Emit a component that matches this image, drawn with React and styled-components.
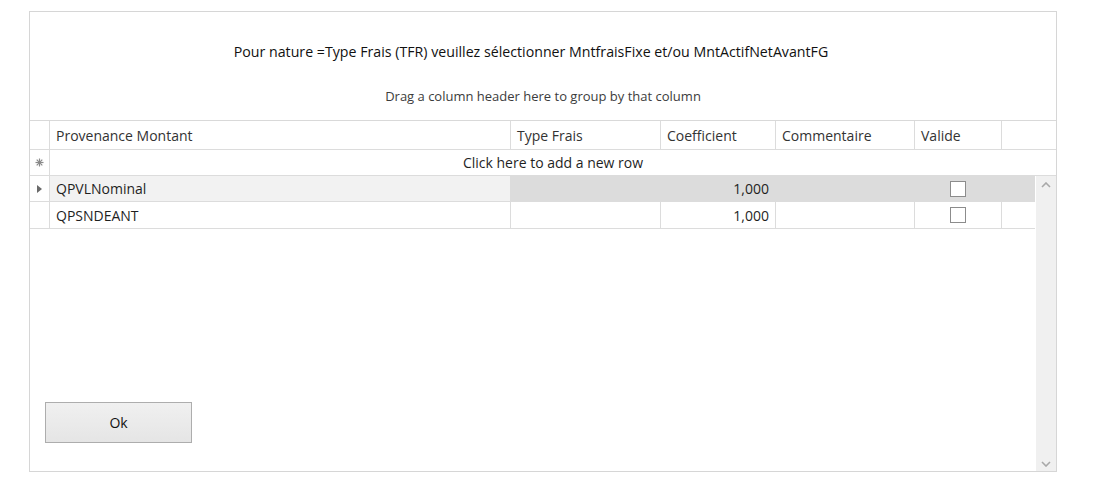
import React from "react";
import styled, { createGlobalStyle } from "styled-components";

const Global = createGlobalStyle`
  html, body { margin: 0; padding: 0; background: #ffffff; }
  body { font-family: "Open Sans", "Noto Sans", "Liberation Sans", sans-serif; color: #1f1f1f; }
  * { box-sizing: border-box; }
`;

const Page = styled.div`
  width: 1108px;
  height: 502px;
  padding: 11px 0 0 29px;
`;

const Panel = styled.div`
  width: 1028px;
  height: 461px;
  border: 1px solid #d6d6d6;
  display: flex;
  flex-direction: column;
  background: #fff;
`;

const GroupPanel = styled.div`
  height: 109px;
  border-bottom: 1px solid #d9d9d9;
  display: flex;
  flex-direction: column;
  align-items: center;
  padding-top: 30px;
`;

const Title = styled.div`
  font-size: 14.2px;
  line-height: 20px;
  color: #111;
  margin-right: 24px;
`;

const DragHint = styled.div`
  margin-top: 25px;
  font-size: 13px;
  line-height: 18px;
  color: #3c3c3c;
`;

const Row = styled.div`
  display: flex;
  height: ${(p) => p.$h || 26}px;
  border-bottom: 1px solid #dcdcdc;
  flex: none;
`;

const Cell = styled.div`
  width: ${(p) => (p.$w ? `${p.$w}px` : "auto")};
  flex: ${(p) => (p.$w ? "none" : "1")};
  border-right: ${(p) => (p.$noBorder ? "none" : "1px solid #dcdcdc")};
  background: ${(p) => p.$bg || "transparent"};
  display: flex;
  align-items: center;
  justify-content: ${(p) =>
    p.$align === "right" ? "flex-end" : p.$align === "center" ? "center" : "flex-start"};
  padding: 0 6px 0 6px;
  font-size: 14px;
  color: #1f1f1f;
  white-space: nowrap;
  overflow: hidden;
`;

const HeaderCell = styled(Cell)`
  color: #333;
`;

const Indicator = styled.div`
  width: 20px;
  flex: none;
  border-right: 1px solid #dcdcdc;
  display: flex;
  align-items: center;
  justify-content: center;
`;

const Body = styled.div`
  flex: 1;
  display: flex;
  min-height: 0;
`;

const BodyMain = styled.div`
  flex: 1;
  display: flex;
  flex-direction: column;
`;

const Spacer = styled.div`
  flex: 1;
`;

const Scrollbar = styled.div`
  width: 20px;
  margin-left: 1px;
  background: #f0f0f0;
  display: flex;
  flex-direction: column;
  justify-content: space-between;
  align-items: center;
  padding: 6px 0 4px;
`;

const OkButton = styled.button`
  width: 147px;
  height: 41px;
  margin: 0 0 28px 15px;
  border: 1px solid #adadad;
  background: linear-gradient(#f0f0f0, #e5e5e5);
  font-family: inherit;
  font-size: 14px;
  color: #111;
  padding: 0;
`;

const Check = styled.div`
  width: 16px;
  height: 16px;
  border: 1px solid #8c8c8c;
  background: #fff;
`;

const cols = [
  { key: "prov", label: "Provenance Montant", w: 461 },
  { key: "type", label: "Type Frais", w: 150 },
  { key: "coef", label: "Coefficient", w: 115 },
  { key: "comm", label: "Commentaire", w: 139 },
  { key: "val", label: "Valide", w: 87 },
];

const rows = [
  { prov: "QPVLNominal", coef: "1,000", focused: true },
  { prov: "QPSNDEANT", coef: "1,000" },
];

const Chevron = ({ up }) => (
  <svg width="10" height="6" viewBox="0 0 10 6">
    <path
      d={up ? "M1 5 L5 1 L9 5" : "M1 1 L5 5 L9 1"}
      fill="none"
      stroke="#a8a8a8"
      strokeWidth="1.6"
    />
  </svg>
);

const Triangle = () => (
  <svg width="5" height="8" viewBox="0 0 5 8">
    <path d="M0 0 L5 4 L0 8 Z" fill="#6a6a6a" />
  </svg>
);

const Star = () => (
  <svg width="9" height="9" viewBox="0 0 9 9">
    <g stroke="#8a8a8a" strokeWidth="1.2">
      <line x1="4.5" y1="0.5" x2="4.5" y2="8.5" />
      <line x1="0.5" y1="4.5" x2="8.5" y2="4.5" />
      <line x1="1.7" y1="1.7" x2="7.3" y2="7.3" />
      <line x1="7.3" y1="1.7" x2="1.7" y2="7.3" />
    </g>
  </svg>
);

export default function App() {
  return (
    <Page>
      <Global />
      <Panel>
        <GroupPanel>
          <Title>
            Pour nature =Type Frais (TFR) veuillez sélectionner MntfraisFixe et/ou MntActifNetAvantFG
          </Title>
          <DragHint>Drag a column header here to group by that column</DragHint>
        </GroupPanel>
        <Row $h={29}>
          <Indicator />
          {cols.map((c) => (
            <HeaderCell key={c.key} $w={c.w}>
              {c.label}
            </HeaderCell>
          ))}
          <HeaderCell $noBorder />
        </Row>
        <Row $h={26}>
          <Indicator>
            <Star />
          </Indicator>
          <Cell $align="center" $noBorder>
            Click here to add a new row
          </Cell>
        </Row>
        <Body>
          <BodyMain>
            {rows.map((r, i) => (
              <Row key={i} $h={i === 0 ? 26 : 27}>
                <Indicator>{r.focused ? <Triangle /> : null}</Indicator>
                <Cell $w={461} $bg={r.focused ? "#f2f2f2" : undefined}>
                  {r.prov}
                </Cell>
                <Cell $w={150} $bg={r.focused ? "#dcdcdc" : undefined} />
                <Cell $w={115} $align="right" $bg={r.focused ? "#dcdcdc" : undefined}>
                  {r.coef}
                </Cell>
                <Cell $w={139} $bg={r.focused ? "#dcdcdc" : undefined} />
                <Cell $w={87} $align="center" $bg={r.focused ? "#dcdcdc" : undefined}>
                  <Check />
                </Cell>
                <Cell $noBorder $bg={r.focused ? "#dcdcdc" : undefined} />
              </Row>
            ))}
            <Spacer />
            <OkButton>Ok</OkButton>
          </BodyMain>
          <Scrollbar>
            <Chevron up />
            <Chevron />
          </Scrollbar>
        </Body>
      </Panel>
    </Page>
  );
}
